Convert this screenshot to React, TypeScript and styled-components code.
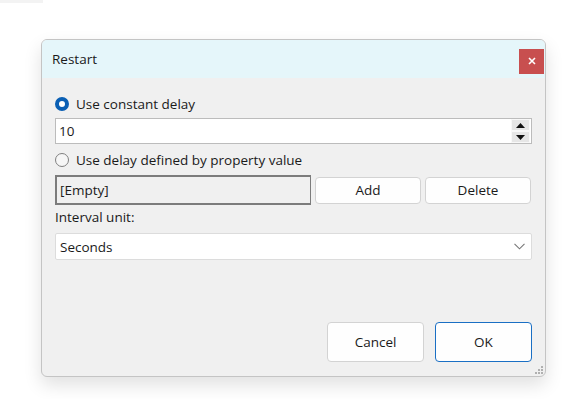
import React from "react";
import styled, { createGlobalStyle } from "styled-components";

const GlobalStyle = createGlobalStyle`
  html, body {
    margin: 0;
    padding: 0;
    background: #ffffff;
    font-family: "Open Sans", "Noto Sans", sans-serif;
    color: #1a1a1a;
  }
`;

const Page = styled.div`
  width: 572px;
  height: 399px;
  overflow: hidden;
  background: #ffffff;
`;

const TopStrip = styled.div`
  width: 43px;
  height: 3px;
  background: #f3f3f3;
`;

const Dialog = styled.div`
  margin: 36px 0 0 41px;
  width: 505px;
  height: 338px;
  box-sizing: border-box;
  display: flex;
  flex-direction: column;
  background: #f0f0f0;
  border: 1px solid #c4c4c4;
  border-radius: 6px;
  overflow: hidden;
  box-shadow: 0 8px 18px rgba(0, 0, 0, 0.12);
  position: relative;
`;

const TitleBar = styled.div`
  height: 38px;
  flex-shrink: 0;
  display: flex;
  align-items: center;
  justify-content: space-between;
  padding: 0 0 0 10px;
  background: #e5f6fa;
`;

const Title = styled.span`
  font-size: 13.5px;
`;

const CloseButton = styled.div`
  width: 25px;
  height: 25px;
  margin-right: 1px;
  margin-top: 4px;
  background: #c84f4f;
  display: flex;
  align-items: center;
  justify-content: center;
`;

const Body = styled.div`
  flex: 1;
  display: flex;
  flex-direction: column;
  padding: 16px 13px 14px 13px;
`;

const RadioRow = styled.label`
  display: flex;
  align-items: center;
  gap: 7px;
  height: 20px;
  font-size: 13.5px;
`;

const RadioDot = styled.span<{ $checked?: boolean }>`
  width: 14px;
  height: 14px;
  border-radius: 50%;
  box-sizing: border-box;
  flex-shrink: 0;
  background: ${(p) => (p.$checked ? "#ffffff" : "#f6f6f6")};
  border: ${(p) => (p.$checked ? "4px solid #0a5fb4" : "1px solid #808080")};
`;

const NumberBox = styled.div`
  margin-top: 4px;
  height: 26px;
  box-sizing: border-box;
  display: flex;
  align-items: center;
  background: #ffffff;
  border: 1px solid #bcbcbc;
  padding-left: 3px;
  font-size: 13.5px;
`;

const NumberValue = styled.span`
  flex: 1;
`;

const Spinner = styled.div`
  display: flex;
  flex-direction: column;
  margin-right: 1px;
`;

const SpinButton = styled.div`
  width: 17px;
  height: 10px;
  background: #e6e6e6;
  border: 1px solid #f8f8f8;
  display: flex;
  align-items: center;
  justify-content: center;
`;

const SecondRadio = styled(RadioRow)`
  margin-top: 6px;
`;

const PropertyRow = styled.div`
  margin-top: 5px;
  display: flex;
  align-items: center;
  gap: 4px;
  height: 30px;
`;

const PropertyField = styled.div`
  width: 256px;
  height: 30px;
  box-sizing: border-box;
  border: 2px solid #7c7c7c;
  border-right-width: 1px;
  display: flex;
  align-items: center;
  padding-left: 3px;
  font-size: 13.5px;
  background: #f0f0f0;
`;

const Button = styled.div<{ $primary?: boolean }>`
  box-sizing: border-box;
  display: flex;
  align-items: center;
  justify-content: center;
  background: #fefefe;
  border: 1px solid ${(p) => (p.$primary ? "#1a6fc4" : "#d3d3d3")};
  border-radius: 4px;
  font-size: 13.5px;
`;

const SmallButton = styled(Button)`
  width: 106px;
  height: 27px;
`;

const FieldLabel = styled.div`
  margin-top: 2px;
  font-size: 13.5px;
  height: 20px;
  display: flex;
  align-items: center;
`;

const Select = styled.div`
  margin-top: 6px;
  height: 27px;
  box-sizing: border-box;
  display: flex;
  align-items: center;
  justify-content: space-between;
  background: #ffffff;
  border: 1px solid #dcdcdc;
  border-radius: 2px;
  padding: 0 6px 0 4px;
  font-size: 13.5px;
`;

const Footer = styled.div`
  margin-top: auto;
  display: flex;
  justify-content: flex-end;
  gap: 11px;
`;

const DialogButton = styled(Button)`
  width: 97px;
  height: 40px;
`;

const Grip = styled.svg`
  position: absolute;
  right: 2px;
  bottom: 2px;
`;

export default function App() {
  return (
    <Page>
      <GlobalStyle />
      <TopStrip />
      <Dialog>
        <TitleBar>
          <Title>Restart</Title>
          <CloseButton>
            <svg width="8" height="8" viewBox="0 0 8 8">
              <path d="M1 1 L7 7 M7 1 L1 7" stroke="#ffffff" strokeWidth="1.6" />
            </svg>
          </CloseButton>
        </TitleBar>
        <Body>
          <RadioRow>
            <RadioDot $checked />
            Use constant delay
          </RadioRow>
          <NumberBox>
            <NumberValue>10</NumberValue>
            <Spinner>
              <SpinButton>
                <svg width="9" height="5" viewBox="0 0 9 5">
                  <path d="M4.5 0 L9 5 L0 5 Z" fill="#111" />
                </svg>
              </SpinButton>
              <SpinButton>
                <svg width="9" height="5" viewBox="0 0 9 5">
                  <path d="M0 0 L9 0 L4.5 5 Z" fill="#111" />
                </svg>
              </SpinButton>
            </Spinner>
          </NumberBox>
          <SecondRadio>
            <RadioDot />
            Use delay defined by property value
          </SecondRadio>
          <PropertyRow>
            <PropertyField>[Empty]</PropertyField>
            <SmallButton>Add</SmallButton>
            <SmallButton>Delete</SmallButton>
          </PropertyRow>
          <FieldLabel>Interval unit:</FieldLabel>
          <Select>
            Seconds
            <svg width="11" height="7" viewBox="0 0 11 7">
              <path d="M0.5 0.8 L5.5 5.8 L10.5 0.8" stroke="#777" strokeWidth="1.1" fill="none" />
            </svg>
          </Select>
          <Footer>
            <DialogButton>Cancel</DialogButton>
            <DialogButton $primary>OK</DialogButton>
          </Footer>
        </Body>
        <Grip width="8" height="8" viewBox="0 0 8 8">
          <rect x="6" y="0" width="2" height="2" fill="#b0b0b0" />
          <rect x="3" y="3" width="2" height="2" fill="#b0b0b0" />
          <rect x="6" y="3" width="2" height="2" fill="#b0b0b0" />
          <rect x="0" y="6" width="2" height="2" fill="#b0b0b0" />
          <rect x="3" y="6" width="2" height="2" fill="#b0b0b0" />
          <rect x="6" y="6" width="2" height="2" fill="#b0b0b0" />
        </Grip>
      </Dialog>
    </Page>
  );
}
